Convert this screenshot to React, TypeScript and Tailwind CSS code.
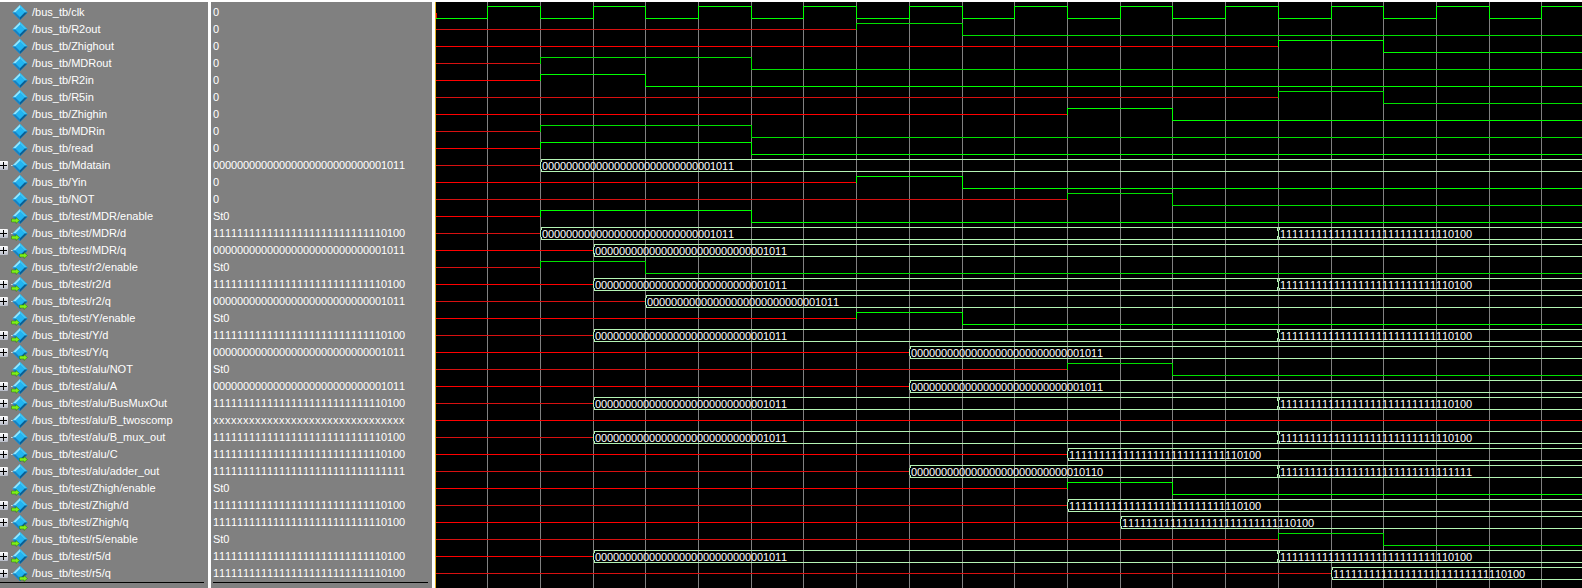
const GRID = [487, 540, 593, 645, 698, 751, 803, 856, 909, 962, 1014, 1067, 1120, 1172, 1225, 1278, 1331, 1383, 1436, 1489, 1541];
const END = 1582;
const START = 436;

const ZERO = "0".repeat(28) + "1011";
const ONE = "1".repeat(27) + "10100";
const ADD0 = "0".repeat(27) + "10110";
const ADD1 = "1".repeat(32);
const XS = "x".repeat(32);

type Dir = "in" | "out" | null;
type Sig = {
  name: string;
  value: string;
  dir?: Dir;
  bus?: boolean;
  pulse?: [number, number];
  changes?: [number, string][];
};

const signals: Sig[] = [
  { name: "/bus_tb/clk", value: "0" },
  { name: "/bus_tb/R2out", value: "0", pulse: [7, 9] },
  { name: "/bus_tb/Zhighout", value: "0", pulse: [15, 17] },
  { name: "/bus_tb/MDRout", value: "0", pulse: [1, 5] },
  { name: "/bus_tb/R2in", value: "0", pulse: [1, 3] },
  { name: "/bus_tb/R5in", value: "0", pulse: [15, 17] },
  { name: "/bus_tb/Zhighin", value: "0", pulse: [11, 13] },
  { name: "/bus_tb/MDRin", value: "0", pulse: [1, 5] },
  { name: "/bus_tb/read", value: "0", pulse: [1, 5] },
  { name: "/bus_tb/Mdatain", value: ZERO, bus: true, changes: [[1, ZERO]] },
  { name: "/bus_tb/Yin", value: "0", pulse: [7, 9] },
  { name: "/bus_tb/NOT", value: "0", pulse: [11, 13] },
  { name: "/bus_tb/test/MDR/enable", value: "St0", dir: "in", pulse: [1, 5] },
  { name: "/bus_tb/test/MDR/d", value: ONE, dir: "in", bus: true, changes: [[1, ZERO], [15, ONE]] },
  { name: "/bus_tb/test/MDR/q", value: ZERO, dir: "out", bus: true, changes: [[2, ZERO]] },
  { name: "/bus_tb/test/r2/enable", value: "St0", dir: "in", pulse: [1, 3] },
  { name: "/bus_tb/test/r2/d", value: ONE, dir: "in", bus: true, changes: [[2, ZERO], [15, ONE]] },
  { name: "/bus_tb/test/r2/q", value: ZERO, dir: "out", bus: true, changes: [[3, ZERO]] },
  { name: "/bus_tb/test/Y/enable", value: "St0", dir: "in", pulse: [7, 9] },
  { name: "/bus_tb/test/Y/d", value: ONE, dir: "in", bus: true, changes: [[2, ZERO], [15, ONE]] },
  { name: "/bus_tb/test/Y/q", value: ZERO, dir: "out", bus: true, changes: [[8, ZERO]] },
  { name: "/bus_tb/test/alu/NOT", value: "St0", dir: "in", pulse: [11, 13] },
  { name: "/bus_tb/test/alu/A", value: ZERO, dir: "in", bus: true, changes: [[8, ZERO]] },
  { name: "/bus_tb/test/alu/BusMuxOut", value: ONE, dir: "in", bus: true, changes: [[2, ZERO], [15, ONE]] },
  { name: "/bus_tb/test/alu/B_twoscomp", value: XS, bus: true, changes: [] },
  { name: "/bus_tb/test/alu/B_mux_out", value: ONE, bus: true, changes: [[2, ZERO], [15, ONE]] },
  { name: "/bus_tb/test/alu/C", value: ONE, dir: "out", bus: true, changes: [[11, ONE]] },
  { name: "/bus_tb/test/alu/adder_out", value: ADD1, bus: true, changes: [[8, ADD0], [15, ADD1]] },
  { name: "/bus_tb/test/Zhigh/enable", value: "St0", dir: "in", pulse: [11, 13] },
  { name: "/bus_tb/test/Zhigh/d", value: ONE, dir: "in", bus: true, changes: [[11, ONE]] },
  { name: "/bus_tb/test/Zhigh/q", value: ONE, dir: "out", bus: true, changes: [[12, ONE]] },
  { name: "/bus_tb/test/r5/enable", value: "St0", dir: "in", pulse: [15, 17] },
  { name: "/bus_tb/test/r5/d", value: ONE, dir: "in", bus: true, changes: [[2, ZERO], [15, ONE]] },
  { name: "/bus_tb/test/r5/q", value: ONE, dir: "out", bus: true, changes: [[16, ONE]] },
];

function SignalIcon({ dir, bus }: { dir?: Dir; bus?: boolean }) {
  return (
    <svg width="18" height="17" viewBox="0 0 18 17" className="shrink-0" shapeRendering="geometricPrecision">
      {bus && <rect x="0" y="8" width="3" height="1" fill="#d8d8d8" />}
      <polygon points="9,1 16.5,8.5 9,16 1.5,8.5" fill="#1d9fe0" />
      <polygon points="9,1 1.5,8.5 4.5,8.5 9,4" fill="#8fe6ff" />
      <polygon points="9,1 16.5,8.5 13.5,8.5 9,4" fill="#3cc4f4" />
      <polygon points="1.5,8.5 9,16 9,13 4.5,8.5" fill="#1682c4" />
      <polygon points="16.5,8.5 9,16 9,13 13.5,8.5" fill="#0b5f94" />
      <polygon points="9,4 13.5,8.5 9,13 4.5,8.5" fill="#22b4f0" />
      {dir === "in" && (
        <polygon points="0.5,11 5,11 5,9.5 8.5,12.5 5,15.5 5,14 0.5,14" fill="#7dee1a" stroke="#2f7d00" strokeWidth="0.5" />
      )}
      {dir === "out" && (
        <polygon points="8.5,12 13,12 13,10.5 16.5,13.5 13,16.5 13,15 8.5,15" fill="#7dee1a" stroke="#2f7d00" strokeWidth="0.5" />
      )}
    </svg>
  );
}

function ExpandBox() {
  return (
    <div className="flex h-[9px] w-[8px] items-center justify-center overflow-hidden rounded-r-[1px] bg-gradient-to-b from-white to-[#b8bcc8]">
      <span className="relative block h-[7px] w-[8px]">
        <span className="absolute left-0 top-[3px] h-px w-[7px] bg-black" />
        <span className="absolute left-[3px] top-0 h-[7px] w-px bg-black" />
      </span>
    </div>
  );
}

function Wave({ sig, row }: { sig: Sig; row: number }) {
  const high = 6.5 + 17 * row;
  const mid = 12.5 + 17 * row;
  const low = 18.5 + 17 * row;
  // odd rows come out slightly dimmer in the capture
  const red = row % 2 ? "#d81010" : "#ff0000";
  const green = row % 2 ? "#00e000" : "#00ff00";

  if (row === 0) {
    let d = `M${START} ${low}`;
    let level = low;
    GRID.forEach((x) => {
      level = level === low ? high : low;
      d += ` H${x + 0.5} V${level}`;
    });
    d += ` H${END}`;
    return (
      <>
        <path d={`M${START} ${mid} V${low}`} stroke={red} fill="none" />
        <path d={d} stroke={green} fill="none" />
      </>
    );
  }

  if (sig.pulse) {
    const up = GRID[sig.pulse[0]] + 0.5;
    const down = GRID[sig.pulse[1]] + 0.5;
    return (
      <>
        <path d={`M${START} ${mid} H${up}`} stroke={red} fill="none" />
        <path d={`M${up} ${mid} V${high} H${down} V${low} H${END}`} stroke={green} fill="none" />
      </>
    );
  }

  const changes = sig.changes ?? [];
  if (changes.length === 0) {
    return <path d={`M${START} ${mid} H${END}`} stroke={red} fill="none" />;
  }

  const first = GRID[changes[0][0]] + 0.5;
  return (
    <>
      <path d={`M${START} ${mid} H${first}`} stroke={red} fill="none" />
      <path d={`M${first} ${mid} L${first + 1} ${high} H${END} M${first} ${mid} L${first + 1} ${low} H${END}`} stroke="#b4f4b4" fill="none" />
      {changes.slice(1).map(([g]) => {
        const x = GRID[g] + 0.5;
        return (
          <path
            key={g}
            d={`M${x - 1} ${high} L${x} ${mid} L${x - 1} ${low} M${x + 1} ${high} L${x} ${mid} L${x + 1} ${low}`}
            stroke="#b4f4b4"
            fill="none"
          />
        );
      })}
      {changes.map(([g, text]) => (
        <text key={g} x={GRID[g] + 2} y={mid + 4} fill="#ffffff" fontSize="11" letterSpacing="-0.117">
          {text}
        </text>
      ))}
    </>
  );
}

export default function App() {
  return (
    <div className="h-[588px] w-[1582px] overflow-hidden bg-white font-['Liberation_Sans',sans-serif] text-[11px] text-white">
      <div className="flex h-full pt-[2px]">
        <div className="h-full w-[208px] shrink-0 bg-[#808080] pt-[2px]">
          {signals.map((s) => (
            <div key={s.name} className="flex h-[17px] items-center whitespace-nowrap">
              <div className="flex w-[11px] shrink-0 items-center">{s.bus && <ExpandBox />}</div>
              <SignalIcon dir={s.dir} bus={s.bus} />
              <span className="ml-[3px]">{s.name}</span>
            </div>
          ))}
          <div className="h-px w-[204px] bg-black" />
        </div>

        <div className="ml-[3px] h-full w-[221px] shrink-0 bg-[#808080] pt-[2px] [font-kerning:none]">
          {signals.map((s) => (
            <div
              key={s.name}
              className={`flex h-[17px] items-center whitespace-nowrap pl-[2px] ${s.value === XS ? "tracking-[0.5px]" : "tracking-[-0.117px]"}`}
            >
              {s.value}
            </div>
          ))}
          <div className="ml-[2px] h-px w-[215px] bg-black" />
        </div>

        <svg
          className="ml-[3px] block h-[586px] w-[1147px] shrink-0 bg-black [font-kerning:none]"
          viewBox="435 2 1147 586"
          shapeRendering="crispEdges"
        >
          {GRID.map((x) => (
            <line key={x} x1={x + 0.5} y1="2" x2={x + 0.5} y2="588" stroke="#808080" />
          ))}
          <line x1="435.5" y1="2" x2="435.5" y2="588" stroke="#e0b020" />
          {signals.map((s, i) => (
            <Wave key={s.name} sig={s} row={i} />
          ))}
        </svg>
      </div>
    </div>
  );
}
